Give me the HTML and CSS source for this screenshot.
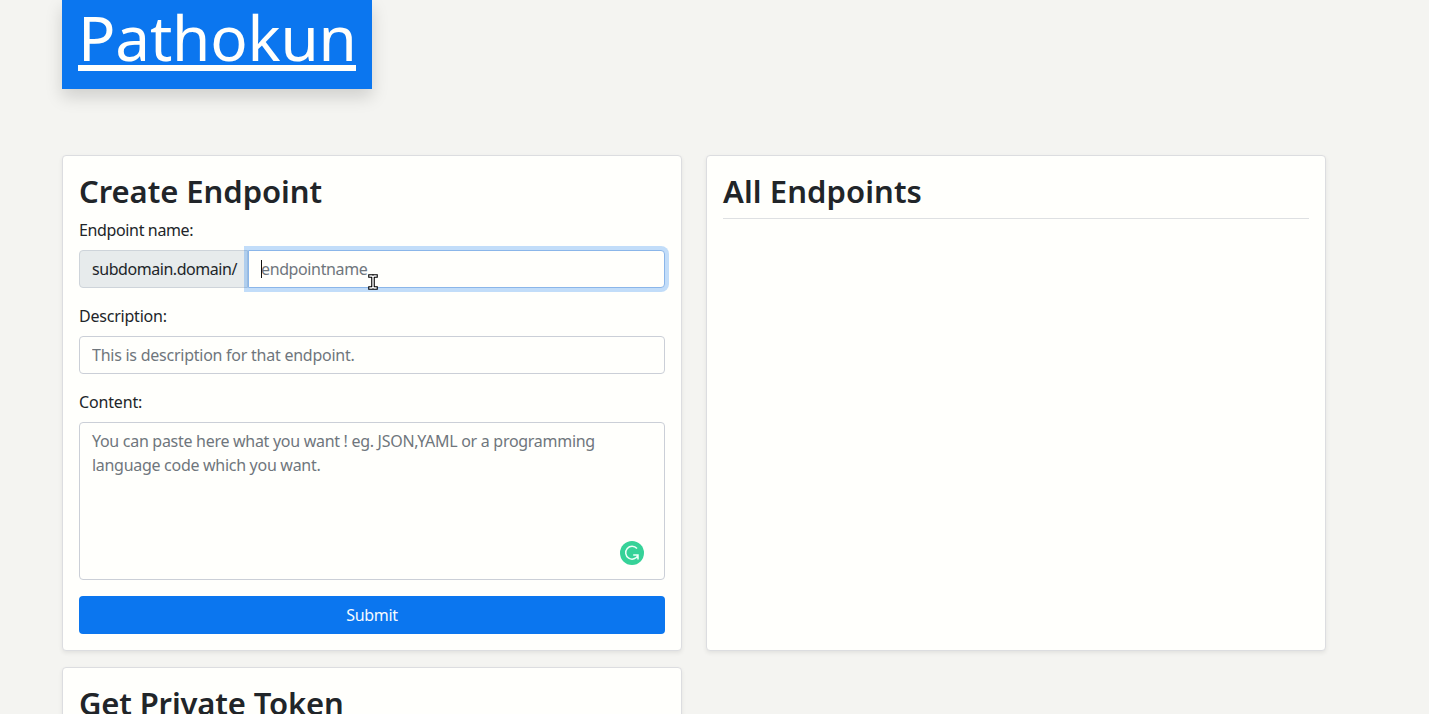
FILE: index.html
```html
<!DOCTYPE html>
<html lang="en">
<head>
<meta charset="utf-8">
<title>Pathokun</title>
<link rel="stylesheet" href="styles.css">
</head>
<body>
<header class="header"><a class="brand" href="#"><span class="brand-name">Pathokun</span></a></header>
<main class="grid">
  <section class="card">
    <h2 class="title title-create">Create Endpoint</h2>
    <form class="form">
      <div class="field">
        <label class="label label-name" for="name">Endpoint name:</label>
        <div class="input-group">
          <span class="prefix">subdomain.domain/</span>
          <div class="input-wrap">
            <input class="control control-name" id="name" placeholder="endpointname">
            <span class="caret"></span>
            <svg class="pointer" width="10" height="18" viewBox="0 0 10 18"><path d="M2 3H4L5 4L6 3H8M5 4V14M2 15H4L5 14L6 15H8" fill="none" stroke="#000" stroke-width="3.6" stroke-linecap="square"/><path d="M2 3H4L5 4L6 3H8M5 4V14M2 15H4L5 14L6 15H8" fill="none" stroke="#fff" stroke-width="1.4" stroke-linecap="square"/></svg>
          </div>
        </div>
      </div>
      <div class="field">
        <label class="label label-description" for="description">Description:</label>
        <input class="control control-description" id="description" placeholder="This is description for that endpoint.">
      </div>
      <div class="field">
        <label class="label label-content" for="content">Content:</label>
        <div class="area-wrap">
          <textarea class="control area" id="content" placeholder="You can paste here what you want ! eg. JSON,YAML or a programming language code which you want."></textarea>
          <svg class="assistant" width="24" height="24" viewBox="0 0 24 24"><circle cx="12" cy="12" r="12" fill="#36d298"/><path d="M17 7.6A6.4 6.4 0 1 0 18 14.2M13.2 14H18V18.4" fill="none" stroke="#effff8" stroke-width="1.5"/></svg>
        </div>
      </div>
      <button class="submit" type="button">Submit</button>
    </form>
  </section>
  <section class="card">
    <h2 class="title title-list">All Endpoints</h2>
  </section>
  <section class="card">
    <h2 class="title title-token">Get Private Token</h2>
  </section>
</main>
</body>
</html>
```
FILE: styles.css
```css
* { box-sizing: border-box; }
html { height: 100%; overflow: hidden; }
body { margin: 0; height: 714px; overflow: hidden; background: #f4f4f1; color: #212529; font: 16px/24px "Noto Sans", sans-serif; }
.header { height: 155px; padding-left: 62px; }
.brand { display: block; width: 310px; height: 89px; padding: 0 16px; background: #0b76ef; color: #fffffc; text-decoration: none; box-shadow: 0 8px 16px rgba(0,0,0,.15); }
.brand-name { display: block; height: 71px; border-bottom: 6px solid #fffffc; font-size: 62px; line-height: 74px; letter-spacing: -.2px; white-space: nowrap; }
.grid { display: grid; grid-template-columns: 620px 620px; column-gap: 24px; row-gap: 16px; padding-left: 62px; }
.card { padding: 16px; background: #fffffc; border: 1px solid #dcdde0; border-radius: 4px; box-shadow: 0 2px 4px rgba(0,0,0,.075); }
.title { height: 38px; margin: 0 0 8px; font-size: 31px; line-height: 38px; font-weight: 600; white-space: nowrap; }
.title-create { letter-spacing: -.05px; }
.title-list { height: 47px; border-bottom: 1px solid #dee0e2; letter-spacing: .08px; }
.title-token { letter-spacing: -.15px; }
.form { display: flex; flex-direction: column; gap: 16px; }
.label { display: block; width: max-content; margin-bottom: 8px; }
.label-name { letter-spacing: -.36px; }
.label-description { letter-spacing: -.22px; }
.label-content { letter-spacing: -.15px; }
.input-group { display: flex; height: 38px; }
.prefix { width: 169px; padding: 6px 12px; border: 1px solid #ced4da; border-radius: 4px 0 0 4px; background: #e7ebec; letter-spacing: -.45px; white-space: nowrap; }
.input-wrap { position: relative; flex: 1; }
.control { display: block; width: 100%; height: 38px; margin: 0; padding: 6px 12px; border: 1px solid #cbcfd7; border-radius: 4px; background: #fffffc; font: inherit; outline: none; }
.control::placeholder { color: #6f767c; opacity: 1; }
.control-name { border-color: #8bb6e9; border-radius: 0 4px 4px 0; box-shadow: 0 0 0 4px rgba(11,118,239,.25); letter-spacing: -.38px; }
.control-description { letter-spacing: -.25px; }
.caret { position: absolute; left: 13px; top: 10px; width: 1px; height: 18px; background: #111; }
.pointer { position: absolute; left: 120px; top: 23px; }
.area-wrap { position: relative; }
.area { height: 158px; resize: none; letter-spacing: -.29px; }
.assistant { position: absolute; right: 21px; bottom: 15px; }
.submit { height: 38px; padding: 0; border: 0; border-radius: 4px; background: #0b76ef; color: #f5fbff; font: inherit; letter-spacing: -.3px; }
```
